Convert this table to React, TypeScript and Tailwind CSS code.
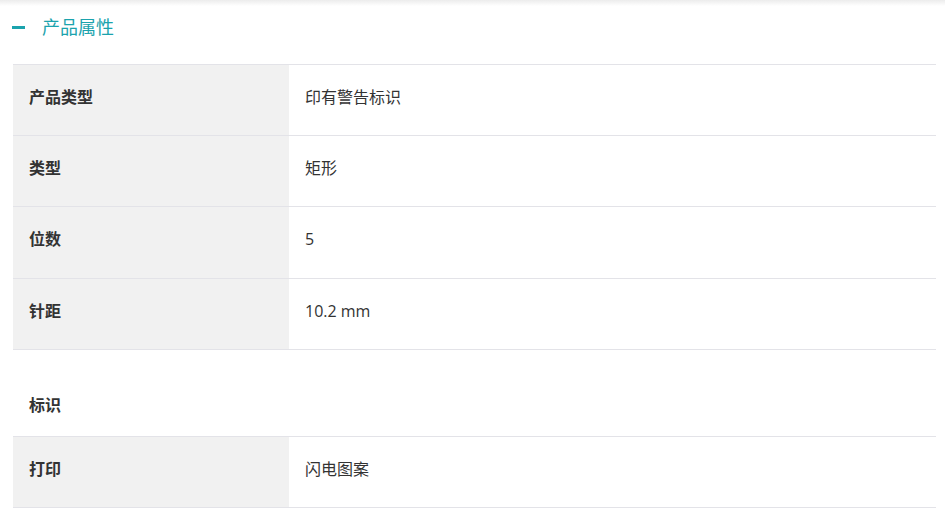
import React from "react";

const rows1 = [
  ["产品类型", "印有警告标识", "h-[71px]"],
  ["类型", "矩形", "h-[71px]"],
  ["位数", "5", "h-[72px]"],
  ["针距", "10.2 mm", "h-[71px]"],
];

function Row({ label, value, h }: { label: string; value: string; h: string }) {
  return (
    <div className={`flex ${h} border-b border-[#e3e3e8]`}>
      <div className="w-[276px] shrink-0 bg-[#f1f1f1] flex items-center pl-4 pb-[7px] text-[16px] font-bold text-[#333]">
        {label}
      </div>
      <div className="flex-1 flex items-center pl-4 pb-[7px] text-[16px] text-[#333]">{value}</div>
    </div>
  );
}

export default function App() {
  return (
    <div
      className="w-[945px] h-[524px] bg-white relative overflow-hidden"
      style={{ fontFamily: '"Open Sans", "Noto Sans CJK SC", sans-serif' }}
    >
      <div className="absolute top-0 left-0 right-0 h-[6px] bg-gradient-to-b from-[#ececec] to-white" />
      <div className="relative flex items-center h-[54px] pl-3">
        <div className="w-[13px] h-[3px] bg-[#1ba3ad]" />
        <span className="ml-[17px] text-[18px] text-[#1ba3ad]">产品属性</span>
      </div>
      <div className="ml-[13px] mr-[9px] mt-[10px] border-t border-[#e3e3e8]">
        {rows1.map(([l, v, h]) => (
          <Row key={l} label={l} value={v} h={h} />
        ))}
        <div className="h-[87px] flex items-end pb-[19px] pl-4 text-[16px] font-bold text-[#333] border-b border-[#e3e3e8]">
          标识
        </div>
        <Row label="打印" value="闪电图案" h="h-[71px]" />
      </div>
    </div>
  );
}
